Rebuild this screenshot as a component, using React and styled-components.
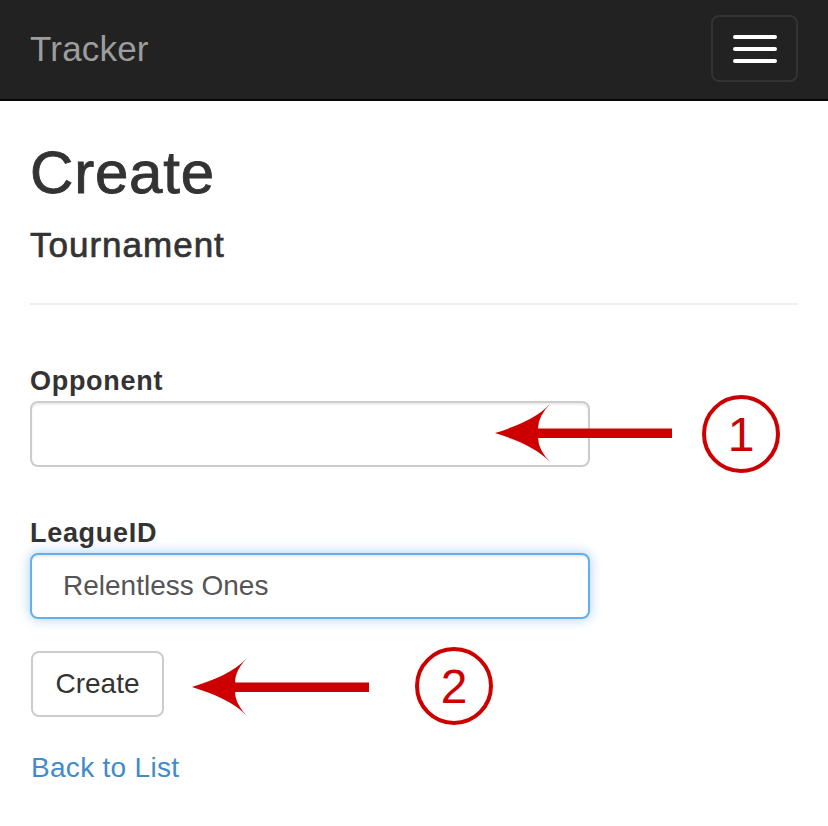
import React from "react"
import styled, { createGlobalStyle } from "styled-components"

const GlobalStyle = createGlobalStyle`
  * {
    box-sizing: border-box;
  }

  body {
    margin: 0;
    background: #fff;
    color: #333;
    font-family: "Liberation Sans", Helvetica, Arial, sans-serif;
  }
`

const Page = styled.div`
  position: relative;
  width: 828px;
  min-height: 826px;
`

const Navbar = styled.nav`
  height: 101px;
  background: #222;
  border-bottom: 2px solid #080808;
  display: flex;
  align-items: center;
  justify-content: space-between;
  padding: 0 30px 2px 30px;
`

const Brand = styled.a`
  font-size: 35px;
  line-height: 1;
  color: #9d9d9d;
  text-decoration: none;
  letter-spacing: 0.2px;
`

const Toggle = styled.button`
  width: 87px;
  height: 67px;
  border: 2px solid #333;
  border-radius: 8px;
  background: transparent;
  display: flex;
  flex-direction: column;
  align-items: center;
  justify-content: center;
  gap: 8px;
  padding: 0;
`

const IconBar = styled.span`
  display: block;
  width: 44px;
  height: 4px;
  border-radius: 2px;
  background: #fff;
`

const Container = styled.main`
  padding: 0 30px;
`

const Title = styled.h2`
  margin: 39px 0 20px;
  font-size: 60px;
  line-height: 66px;
  font-weight: 500;
  letter-spacing: 0.8px;
  -webkit-text-stroke: 0.9px #333;
`

const Subtitle = styled.h4`
  margin: 0 0 38px;
  font-size: 35px;
  line-height: 38.5px;
  font-weight: 500;
  letter-spacing: 1px;
  -webkit-text-stroke: 0.7px #333;
`

const Rule = styled.hr`
  margin: 0 0 61px;
  border: 0;
  border-top: 2px solid #eee;
`

const FormGroup = styled.div`
  margin-bottom: ${p => p.$gap || 0}px;
`

const Label = styled.label`
  display: block;
  margin-bottom: 5px;
  font-size: 27px;
  line-height: 30px;
  font-weight: bold;
  letter-spacing: 0.7px;
`

const Input = styled.input`
  display: block;
  width: 560px;
  height: 66px;
  padding: 0 31px;
  font-family: inherit;
  font-size: 28px;
  color: #555;
  background: #fff;
  border: 2px solid ${p => (p.$focused ? "#66afe9" : "#ccc")};
  border-radius: 8px;
  outline: none;
  box-shadow: ${p =>
    p.$focused
      ? "inset 0 2px 2px rgba(0,0,0,.075), 0 0 12px rgba(102,175,233,.6)"
      : "inset 0 2px 2px rgba(0,0,0,.075)"};
`

const Button = styled.button`
  display: block;
  width: 133px;
  height: 66px;
  margin-left: 1px;
  font-family: inherit;
  font-size: 28px;
  color: #333;
  background: #fff;
  border: 2px solid #ccc;
  border-radius: 8px;
  padding: 0;
`

const BackLink = styled.a`
  display: inline-block;
  margin-top: 31px;
  margin-left: 1px;
  font-size: 28px;
  line-height: 40px;
  letter-spacing: 0.3px;
  color: #428bca;
  text-decoration: none;
`

const Callout = styled.div`
  position: absolute;
  top: ${p => p.$top}px;
  left: ${p => p.$left}px;
  width: 78px;
  height: 78px;
  border: 4px solid #cc0000;
  border-radius: 50%;
  display: flex;
  align-items: center;
  justify-content: center;
  color: #cc0000;
  font-size: 48px;
  line-height: 1;
  font-weight: 300;
  padding-top: 2px;
`

const ArrowSvg = styled.svg`
  position: absolute;
  top: ${p => p.$top}px;
  left: ${p => p.$left}px;
  overflow: visible;
`

function Arrow({ top, left }) {
  return (
    <ArrowSvg $top={top} $left={left} width="177" height="58" viewBox="0 0 177 58">
      <path
        d="M0 29 C 22 22, 42 14, 55 0 Q 40 16, 44 29 Q 40 42, 55 58 C 42 44, 22 36, 0 29 Z"
        fill="#cc0000"
      />
      <rect x="42" y="24.5" width="135" height="9.5" fill="#cc0000" />
    </ArrowSvg>
  )
}

function App() {
  return (
    <Page>
      <GlobalStyle />
      <Navbar>
        <Brand href="#">Tracker</Brand>
        <Toggle type="button" aria-label="Toggle navigation">
          <IconBar />
          <IconBar />
          <IconBar />
        </Toggle>
      </Navbar>

      <Container>
        <Title>Create</Title>
        <Subtitle>Tournament</Subtitle>
        <Rule />

        <FormGroup $gap={51}>
          <Label>Opponent</Label>
          <Input type="text" />
        </FormGroup>

        <FormGroup $gap={32}>
          <Label>LeagueID</Label>
          <Input type="text" defaultValue="Relentless Ones" $focused />
        </FormGroup>

        <Button type="button">Create</Button>
        <BackLink href="#">Back to List</BackLink>
      </Container>

      <Arrow top={404} left={495} />
      <Callout $top={395} $left={702}>1</Callout>

      <Arrow top={658} left={192} />
      <Callout $top={647} $left={415}>2</Callout>
    </Page>
  )
}

export default App
